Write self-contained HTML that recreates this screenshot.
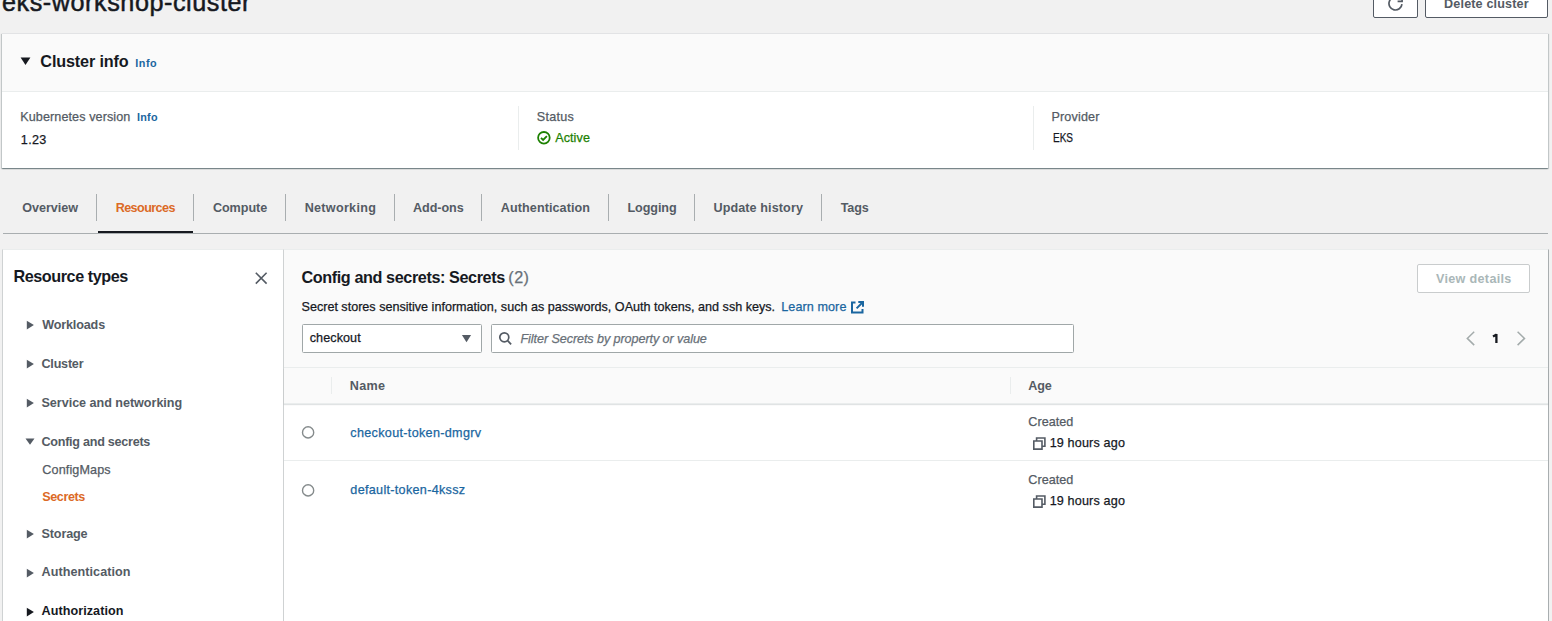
<!DOCTYPE html>
<html><head><meta charset="utf-8"><style>
html,body{margin:0;padding:0;width:1552px;height:621px;overflow:hidden;background:#f1f1f1;position:relative}
.t{position:absolute;white-space:nowrap}
.t.r{-webkit-text-stroke:0.25px currentColor}
.a{position:absolute;box-sizing:border-box}
</style></head><body>
<!-- top buttons -->
<div class="a" style="left:1373px;top:-16px;width:45px;height:34px;border:1px solid #545b64;border-radius:2px;background:#fff"></div>
<div class="a" style="left:1425px;top:-16px;width:123px;height:34px;border:1px solid #545b64;border-radius:2px;background:#fff"></div>
<svg class="a" style="left:1386px;top:-6px" width="20" height="20" viewBox="0 0 20 20">
  <path d="M15.95 10.1 A6.5 6.5 0 1 1 12.6 3.8" fill="none" stroke="#545b64" stroke-width="1.7"/>
  <path d="M11.6 7.4 L16.1 7.4 L16.1 1" fill="none" stroke="#545b64" stroke-width="1.7"/>
</svg>
<!-- cluster info container -->
<div class="a" style="left:2px;top:33px;width:1546px;height:135px;background:#fff;border-top:1px solid #e2e3e5;box-shadow:0 1px 1px 0 rgba(0,28,36,.3),1px 1px 1px 0 rgba(0,28,36,.15),-1px 1px 1px 0 rgba(0,28,36,.15)"></div>
<div class="a" style="left:2px;top:34px;width:1546px;height:58px;background:#fafafa;border-bottom:1px solid #eaeded"></div>
<svg class="a" style="left:20px;top:57px" width="11" height="9" viewBox="0 0 11 9"><polygon points="0.6,0.6 10.4,0.6 5.5,8.1" fill="#16191f"/></svg>
<div class="a" style="left:518px;top:106px;width:1px;height:44px;background:#eaeded"></div>
<div class="a" style="left:1033px;top:106px;width:1px;height:44px;background:#eaeded"></div>
<svg class="a" style="left:536px;top:130px" width="16" height="16" viewBox="0 0 16 16">
  <circle cx="7.9" cy="7.8" r="5.8" fill="none" stroke="#1d8102" stroke-width="1.8"/>
  <path d="M5 7.9 L7.1 10 L10.9 6.1" fill="none" stroke="#1d8102" stroke-width="1.8"/>
</svg>
<!-- tabs -->
<div class="a" style="left:3px;top:233px;width:1545px;height:1px;background:#a9aeb0"></div>
<div class="a" style="left:98px;top:231px;width:95px;height:2px;background:#16191f"></div>
<div class="a" style="left:96px;top:194px;width:1px;height:27px;background:#a9aeb0"></div>
<div class="a" style="left:193px;top:194px;width:1px;height:27px;background:#a9aeb0"></div>
<div class="a" style="left:285px;top:194px;width:1px;height:27px;background:#a9aeb0"></div>
<div class="a" style="left:394px;top:194px;width:1px;height:27px;background:#a9aeb0"></div>
<div class="a" style="left:481px;top:194px;width:1px;height:27px;background:#a9aeb0"></div>
<div class="a" style="left:608px;top:194px;width:1px;height:27px;background:#a9aeb0"></div>
<div class="a" style="left:694px;top:194px;width:1px;height:27px;background:#a9aeb0"></div>
<div class="a" style="left:821px;top:194px;width:1px;height:27px;background:#a9aeb0"></div>
<!-- left panel -->
<div class="a" style="left:2px;top:249px;width:282px;height:400px;background:#fff;border-left:1px solid #cfd2d3;border-right:1px solid #cfd2d3;border-top:1px solid #eaeded"></div>
<svg class="a" style="left:254px;top:271px" width="14" height="14" viewBox="0 0 14 14"><path d="M1.8 1.8 L12.6 12.6 M12.6 1.8 L1.8 12.6" stroke="#545b64" stroke-width="1.6" fill="none"/></svg>
<svg class="a" style="left:26px;top:320px" width="9" height="10" viewBox="0 0 9 10"><polygon points="0.8,0.8 7.9,5 0.8,9.4" fill="#545b64"/></svg>
<svg class="a" style="left:26px;top:359px" width="9" height="10" viewBox="0 0 9 10"><polygon points="0.8,0.8 7.9,5 0.8,9.4" fill="#545b64"/></svg>
<svg class="a" style="left:26px;top:398px" width="9" height="10" viewBox="0 0 9 10"><polygon points="0.8,0.8 7.9,5 0.8,9.4" fill="#545b64"/></svg>
<svg class="a" style="left:25px;top:438px" width="10" height="8" viewBox="0 0 10 8"><polygon points="0.5,0.4 9.5,0.4 5,6.8" fill="#545b64"/></svg>
<svg class="a" style="left:26px;top:529px" width="9" height="10" viewBox="0 0 9 10"><polygon points="0.8,0.8 7.9,5 0.8,9.4" fill="#545b64"/></svg>
<svg class="a" style="left:26px;top:568px" width="9" height="10" viewBox="0 0 9 10"><polygon points="0.8,0.8 7.9,5 0.8,9.4" fill="#545b64"/></svg>
<svg class="a" style="left:26px;top:607px" width="9" height="10" viewBox="0 0 9 10"><polygon points="0.8,0.8 7.9,5 0.8,9.4" fill="#16191f"/></svg>
<!-- right panel -->
<div class="a" style="left:284px;top:249px;width:1265px;height:400px;background:#fff;border-top:1px solid #eaeded;border-right:1px solid #a9aeb0"></div>
<div class="a" style="left:284px;top:250px;width:1264px;height:118px;background:#fafafa;border-bottom:1px solid #eaeded"></div>
<div class="a" style="left:284px;top:368px;width:1264px;height:36px;background:#fafafa;border-bottom:1px solid #eaeded;box-shadow:0 1px 1px rgba(0,28,36,.12)"></div>
<div class="a" style="left:331px;top:377px;width:1px;height:17px;background:#eaeded"></div>
<div class="a" style="left:1010px;top:377px;width:1px;height:17px;background:#eaeded"></div>
<div class="a" style="left:284px;top:460px;width:1264px;height:1px;background:#eaeded"></div>
<!-- select + filter -->
<div class="a" style="left:302px;top:324px;width:180px;height:29px;background:#fff;border:1px solid #a0a7a8;border-radius:1.5px"></div>
<svg class="a" style="left:461px;top:334px" width="12" height="9" viewBox="0 0 12 9"><polygon points="0.9,1 10.1,1 5.5,8.2" fill="#545b64"/></svg>
<div class="a" style="left:491px;top:324px;width:583px;height:29px;background:#fff;border:1px solid #a0a7a8;border-radius:1.5px"></div>
<svg class="a" style="left:497px;top:331px" width="16" height="16" viewBox="0 0 16 16"><circle cx="7.3" cy="6.3" r="4.5" fill="none" stroke="#545b64" stroke-width="1.7"/><path d="M10.4 9.4 L14.1 13.4" stroke="#545b64" stroke-width="1.8"/></svg>
<!-- learn more icon -->
<svg class="a" style="left:850px;top:300px" width="15" height="15" viewBox="0 0 15 15">
  <path d="M5.5 2.5 L2 2.5 L2 12.5 L12.5 12.5 L12.5 9" fill="none" stroke="#1a66a0" stroke-width="2"/>
  <path d="M8.3 2 L13 2 L13 6.7 M12.7 2.3 L6.6 8.4" fill="none" stroke="#1a66a0" stroke-width="2"/>
</svg>
<!-- view details button -->
<div class="a" style="left:1417px;top:264px;width:113px;height:29px;background:#fff;border:1px solid #c9cccd;border-radius:2px"></div>
<svg class="a" style="left:1464px;top:330px" width="14" height="18" viewBox="0 0 14 18"><path d="M10.2 1.8 L3.3 8.4 L10.2 15.1" fill="none" stroke="#a3abab" stroke-width="1.5"/></svg>
<svg class="a" style="left:1515px;top:330px" width="14" height="18" viewBox="0 0 14 18"><path d="M2.6 1.8 L9.5 8.4 L2.6 15.1" fill="none" stroke="#a3abab" stroke-width="1.5"/></svg>
<svg class="a" style="left:1490px;top:330px" width="12" height="16" viewBox="0 0 12 16"><path d="M6.4 3.9 L6.4 13 M3 6.4 L6.6 4.4" fill="none" stroke="#16191f" stroke-width="2.3"/></svg>
<!-- radios -->
<svg class="a" style="left:301px;top:425px" width="15" height="15" viewBox="0 0 15 15"><circle cx="7.1" cy="7.4" r="5.6" fill="#fff" stroke="#858b8c" stroke-width="1.4"/></svg>
<svg class="a" style="left:301px;top:483px" width="15" height="15" viewBox="0 0 15 15"><circle cx="7.1" cy="7.4" r="5.6" fill="#fff" stroke="#858b8c" stroke-width="1.4"/></svg>
<!-- copy icons -->
<svg class="a" style="left:1032px;top:436px" width="15" height="15" viewBox="0 0 15 15"><path d="M1.8 5 L10 5 L10 13.1 L1.8 13.1 Z M4.6 5 L4.6 2 L12.9 2 L12.9 10.2 L10 10.2" fill="none" stroke="#545b64" stroke-width="1.6"/></svg>
<svg class="a" style="left:1032px;top:494px" width="15" height="15" viewBox="0 0 15 15"><path d="M1.8 5 L10 5 L10 13.1 L1.8 13.1 Z M4.6 5 L4.6 2 L12.9 2 L12.9 10.2 L10 10.2" fill="none" stroke="#545b64" stroke-width="1.6"/></svg>

<div class="t r" style="left:2.00px;top:-11.60px;font:normal normal 25.2px/28px 'Liberation Sans',sans-serif;letter-spacing:0.553px;color:#16191f;-webkit-text-stroke:0.5px currentColor">eks-workshop-cluster</div>
<div class="t" style="left:1444.10px;top:-3.00px;font:normal bold 12.6px/14px 'Liberation Sans',sans-serif;letter-spacing:0.146px;color:#545b64">Delete cluster</div>
<div class="t" style="left:40.35px;top:52.00px;font:normal bold 16.2px/18px 'Liberation Sans',sans-serif;letter-spacing:-0.150px;color:#16191f">Cluster info</div>
<div class="t" style="left:135.30px;top:56.90px;font:normal bold 10.8px/12px 'Liberation Sans',sans-serif;letter-spacing:0.533px;color:#1a66a0">Info</div>
<div class="t r" style="left:20.20px;top:109.90px;font:normal normal 12.6px/14px 'Liberation Sans',sans-serif;letter-spacing:0.097px;color:#545b64">Kubernetes version</div>
<div class="t" style="left:136.90px;top:111.00px;font:normal bold 10.8px/12px 'Liberation Sans',sans-serif;letter-spacing:0.317px;color:#1a66a0">Info</div>
<div class="t r" style="left:20.85px;top:132.50px;font:normal normal 12.6px/14px 'Liberation Sans',sans-serif;letter-spacing:0.300px;color:#16191f">1.23</div>
<div class="t r" style="left:536.70px;top:109.90px;font:normal normal 12.6px/14px 'Liberation Sans',sans-serif;letter-spacing:0.290px;color:#545b64">Status</div>
<div class="t r" style="left:555.20px;top:130.80px;font:normal normal 12.6px/14px 'Liberation Sans',sans-serif;letter-spacing:0.080px;color:#1d8102">Active</div>
<div class="t r" style="left:1051.45px;top:109.70px;font:normal normal 12.6px/14px 'Liberation Sans',sans-serif;letter-spacing:0.157px;color:#545b64">Provider</div>
<div class="t r" style="left:1052.50px;top:130.60px;font:normal normal 12.6px/14px 'Liberation Sans',sans-serif;letter-spacing:0.000px;color:#16191f;transform:scaleX(0.796);transform-origin:0 0">EKS</div>
<div class="t" style="left:22.15px;top:200.80px;font:normal bold 12.6px/14px 'Liberation Sans',sans-serif;letter-spacing:-0.000px;color:#545b64">Overview</div>
<div class="t" style="left:115.65px;top:200.80px;font:normal bold 12.6px/14px 'Liberation Sans',sans-serif;letter-spacing:-0.575px;color:#dc6a26">Resources</div>
<div class="t" style="left:212.90px;top:200.80px;font:normal bold 12.6px/14px 'Liberation Sans',sans-serif;letter-spacing:-0.033px;color:#545b64">Compute</div>
<div class="t" style="left:304.65px;top:200.80px;font:normal bold 12.6px/14px 'Liberation Sans',sans-serif;letter-spacing:0.300px;color:#545b64">Networking</div>
<div class="t" style="left:413.10px;top:200.80px;font:normal bold 12.6px/14px 'Liberation Sans',sans-serif;letter-spacing:-0.075px;color:#545b64">Add-ons</div>
<div class="t" style="left:500.85px;top:200.80px;font:normal bold 12.6px/14px 'Liberation Sans',sans-serif;letter-spacing:0.077px;color:#545b64">Authentication</div>
<div class="t" style="left:627.45px;top:200.80px;font:normal bold 12.6px/14px 'Liberation Sans',sans-serif;letter-spacing:-0.083px;color:#545b64">Logging</div>
<div class="t" style="left:713.45px;top:200.80px;font:normal bold 12.6px/14px 'Liberation Sans',sans-serif;letter-spacing:0.100px;color:#545b64">Update history</div>
<div class="t" style="left:840.80px;top:200.80px;font:normal bold 12.6px/14px 'Liberation Sans',sans-serif;letter-spacing:-0.183px;color:#545b64">Tags</div>
<div class="t" style="left:13.45px;top:266.80px;font:normal bold 16.2px/18px 'Liberation Sans',sans-serif;letter-spacing:-0.438px;color:#16191f">Resource types</div>
<div class="t" style="left:42.20px;top:318.10px;font:normal bold 12.6px/14px 'Liberation Sans',sans-serif;letter-spacing:-0.150px;color:#545b64">Workloads</div>
<div class="t" style="left:41.50px;top:357.00px;font:normal bold 12.6px/14px 'Liberation Sans',sans-serif;letter-spacing:-0.225px;color:#545b64">Cluster</div>
<div class="t" style="left:41.50px;top:396.20px;font:normal bold 12.6px/14px 'Liberation Sans',sans-serif;letter-spacing:-0.033px;color:#545b64">Service and networking</div>
<div class="t" style="left:41.50px;top:435.00px;font:normal bold 12.6px/14px 'Liberation Sans',sans-serif;letter-spacing:-0.265px;color:#545b64">Config and secrets</div>
<div class="t r" style="left:42.30px;top:463.20px;font:normal normal 12.6px/14px 'Liberation Sans',sans-serif;letter-spacing:0.122px;color:#545b64">ConfigMaps</div>
<div class="t" style="left:42.30px;top:489.80px;font:normal bold 12.6px/14px 'Liberation Sans',sans-serif;letter-spacing:-0.425px;color:#dc6a26">Secrets</div>
<div class="t" style="left:41.50px;top:526.70px;font:normal bold 12.6px/14px 'Liberation Sans',sans-serif;letter-spacing:-0.133px;color:#545b64">Storage</div>
<div class="t" style="left:41.50px;top:565.40px;font:normal bold 12.6px/14px 'Liberation Sans',sans-serif;letter-spacing:0.065px;color:#545b64">Authentication</div>
<div class="t" style="left:41.50px;top:604.40px;font:normal bold 12.6px/14px 'Liberation Sans',sans-serif;letter-spacing:0.063px;color:#16191f">Authorization</div>
<div class="t" style="left:301.50px;top:268.10px;font:normal bold 16.2px/18px 'Liberation Sans',sans-serif;letter-spacing:-0.400px;color:#16191f">Config and secrets: Secrets</div>
<div class="t r" style="left:508.34px;top:268.10px;font:normal normal 16.2px/18px 'Liberation Sans',sans-serif;letter-spacing:0.420px;color:#687078">(2)</div>
<div class="t r" style="left:301.50px;top:299.80px;font:normal normal 12.6px/14px 'Liberation Sans',sans-serif;letter-spacing:-0.004px;color:#16191f">Secret stores sensitive information, such as passwords, OAuth tokens, and ssh keys.</div>
<div class="t r" style="left:781.25px;top:299.90px;font:normal normal 12.6px/14px 'Liberation Sans',sans-serif;letter-spacing:0.083px;color:#1a66a0">Learn more</div>
<div class="t r" style="left:309.75px;top:331.40px;font:normal normal 12.6px/14px 'Liberation Sans',sans-serif;letter-spacing:0.071px;color:#16191f">checkout</div>
<div class="t r" style="left:520.50px;top:331.70px;font:italic normal 12.6px/14px 'Liberation Sans',sans-serif;letter-spacing:-0.078px;color:#687078">Filter Secrets by property or value</div>
<div class="t" style="left:1435.95px;top:272.00px;font:normal bold 12.6px/14px 'Liberation Sans',sans-serif;letter-spacing:0.323px;color:#aab7b8">View details</div>
<div class="t" style="left:349.85px;top:379.00px;font:normal bold 12.6px/14px 'Liberation Sans',sans-serif;letter-spacing:0.267px;color:#545b64">Name</div>
<div class="t" style="left:1028.30px;top:378.80px;font:normal bold 12.6px/14px 'Liberation Sans',sans-serif;letter-spacing:-0.200px;color:#545b64">Age</div>
<div class="t r" style="left:350.35px;top:425.60px;font:normal normal 12.6px/14px 'Liberation Sans',sans-serif;letter-spacing:0.321px;color:#1a66a0">checkout-token-dmgrv</div>
<div class="t r" style="left:350.35px;top:482.70px;font:normal normal 12.6px/14px 'Liberation Sans',sans-serif;letter-spacing:0.308px;color:#1a66a0">default-token-4kssz</div>
<div class="t r" style="left:1028.30px;top:414.60px;font:normal normal 12.6px/14px 'Liberation Sans',sans-serif;letter-spacing:0.042px;color:#545b64">Created</div>
<div class="t r" style="left:1049.65px;top:435.80px;font:normal normal 12.6px/14px 'Liberation Sans',sans-serif;letter-spacing:0.159px;color:#16191f">19 hours ago</div>
<div class="t r" style="left:1028.30px;top:472.50px;font:normal normal 12.6px/14px 'Liberation Sans',sans-serif;letter-spacing:0.042px;color:#545b64">Created</div>
<div class="t r" style="left:1049.65px;top:493.80px;font:normal normal 12.6px/14px 'Liberation Sans',sans-serif;letter-spacing:0.159px;color:#16191f">19 hours ago</div>
</body></html>
